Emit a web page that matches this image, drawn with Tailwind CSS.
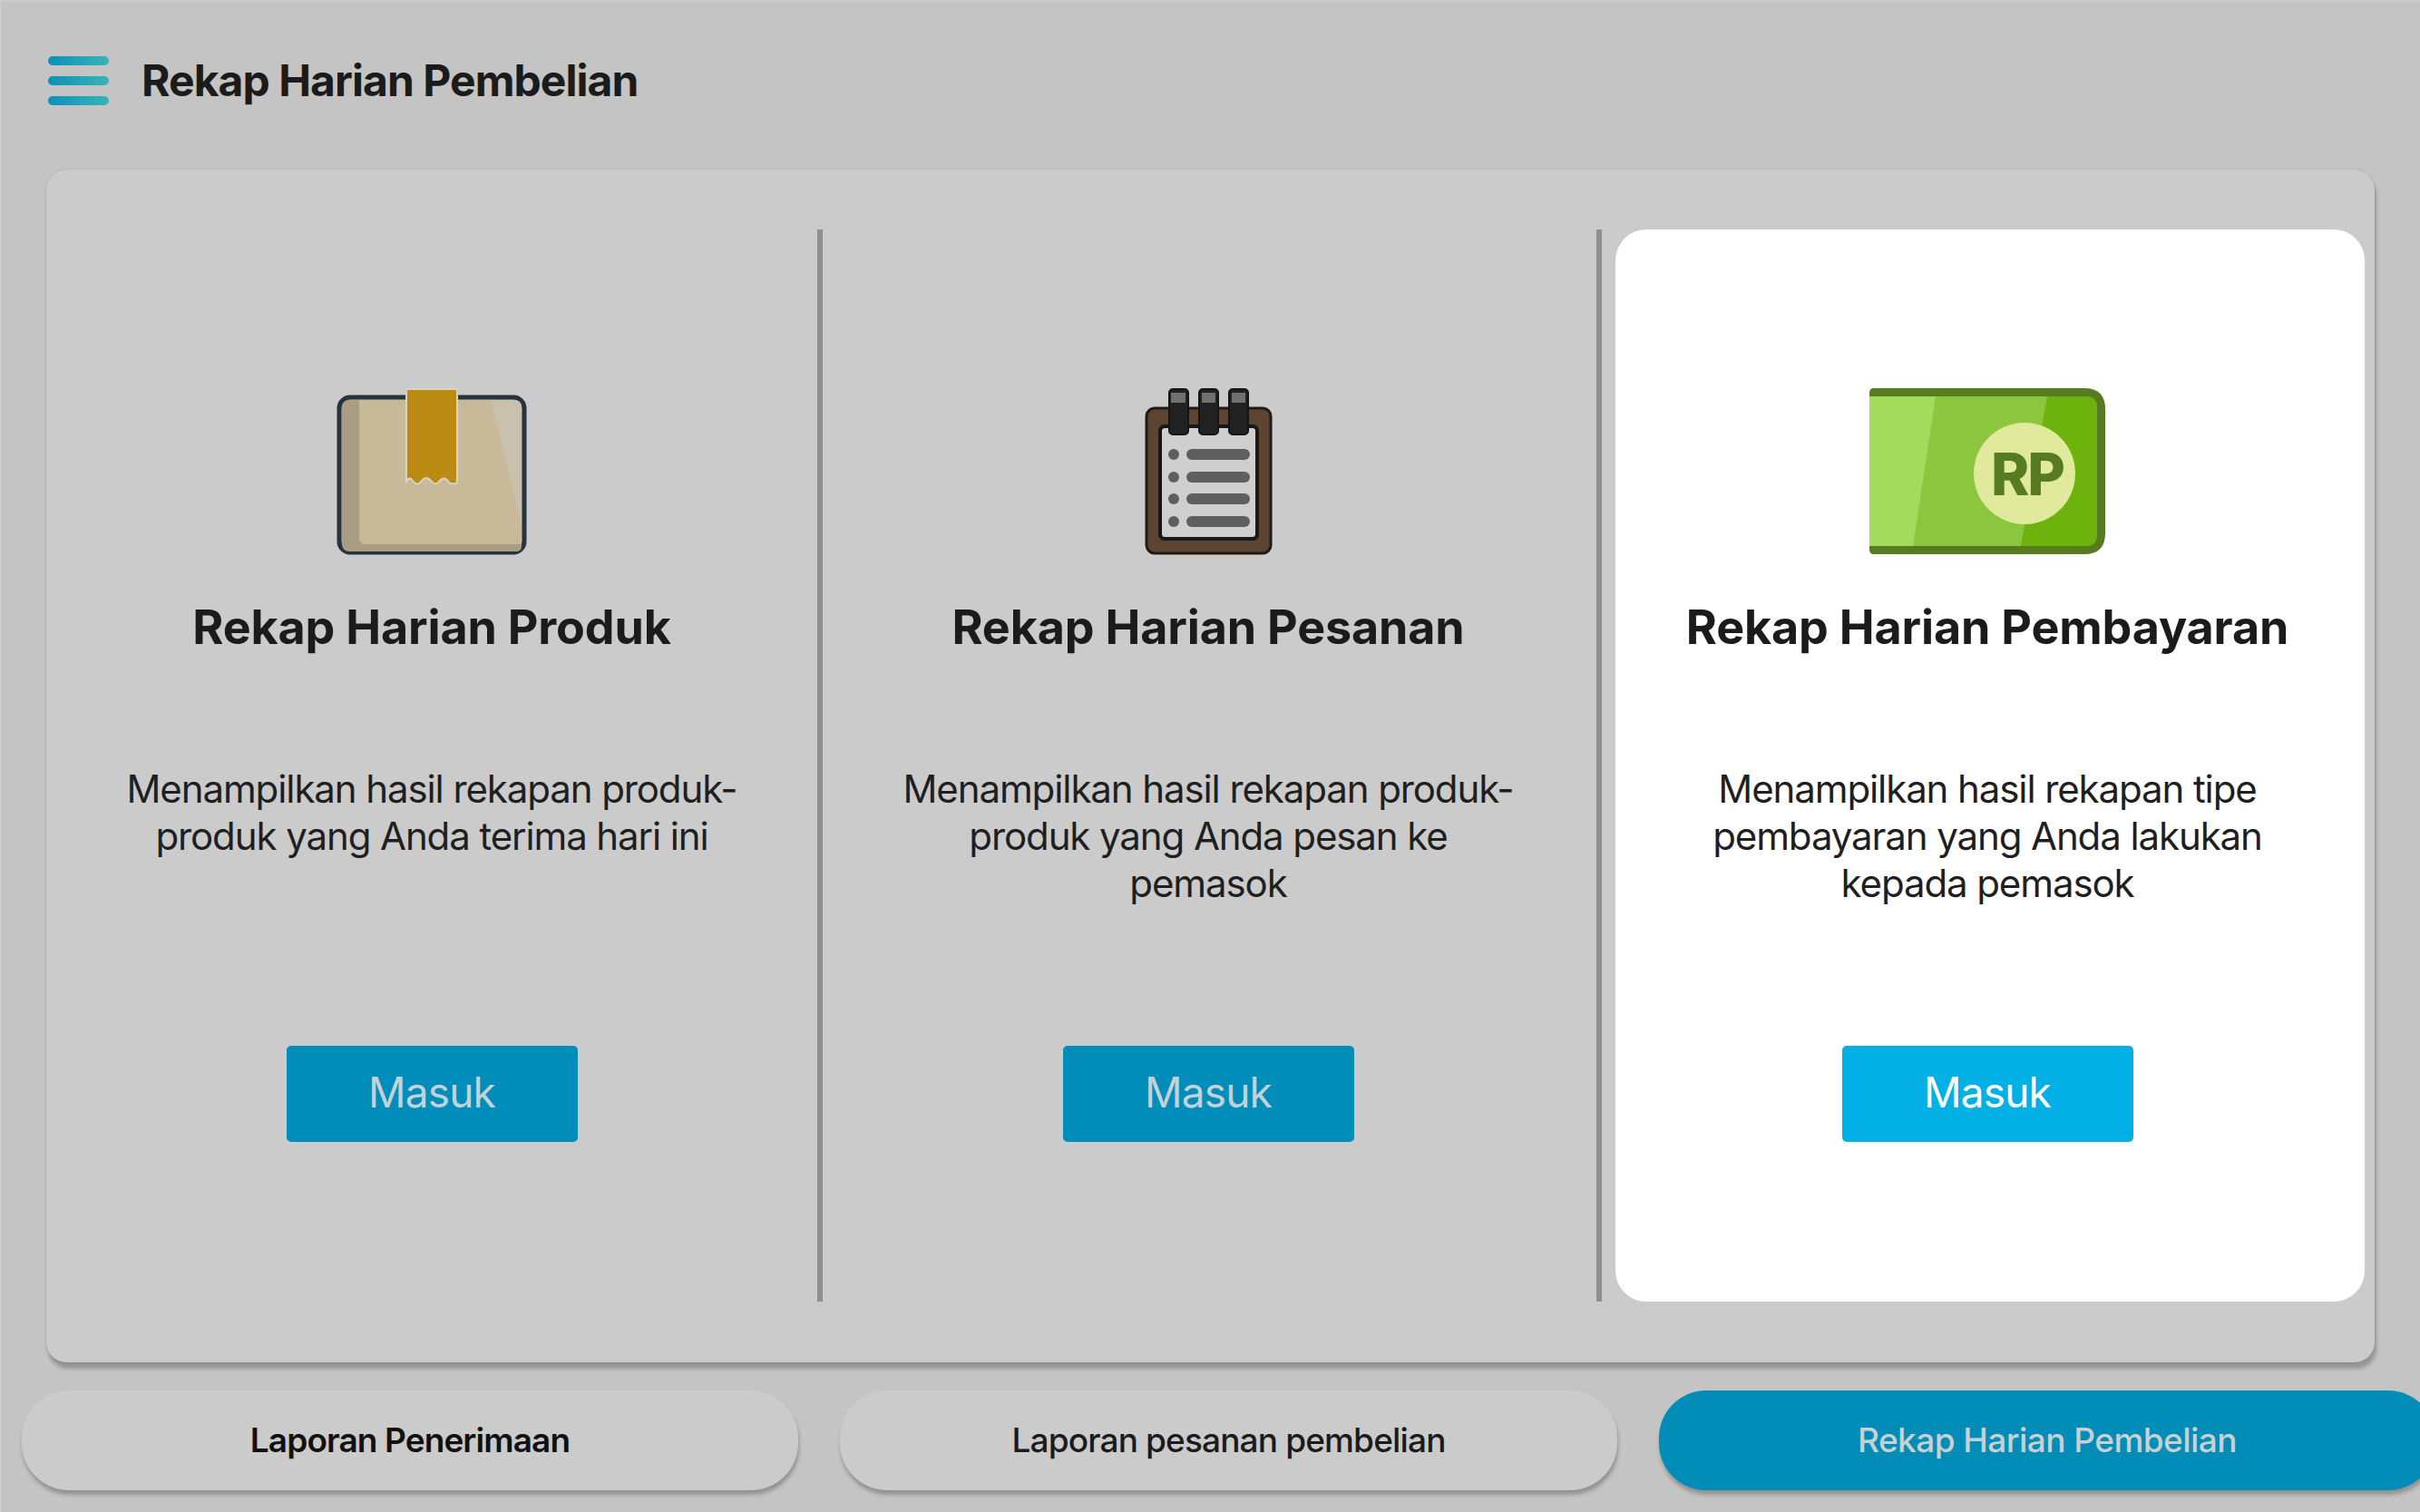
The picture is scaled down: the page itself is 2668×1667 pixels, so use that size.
<!DOCTYPE html>
<html lang="en">
<head>
    <meta charset="UTF-8">
    <meta name="viewport" content="width=device-width, initial-scale=1.0">
    <script src="https://cdn.jsdelivr.net/npm/@tailwindcss/browser@4"></script>
    <title>Rekap Harian Pembelian</title>
</head>
<body class="bg-[#c4c4c4] font-['Inter',sans-serif] overflow-hidden">
    <div class="h-[1667px] w-[2668px] flex flex-col overflow-hidden border-t-2 border-l-2 border-[#cdcdcd]">
        <!-- Header -->
        <header class="h-[185px] shrink-0 pl-[51px] pb-[11px] flex items-center">
            <div class="w-[67px] flex flex-col gap-[12px]">
                <span class="h-[10px] rounded-full bg-linear-to-r from-[#0a8fb8] to-[#38b4b4]"></span>
                <span class="h-[10px] rounded-full bg-linear-to-r from-[#0a8fb8] to-[#38b4b4]"></span>
                <span class="h-[10px] rounded-full bg-linear-to-r from-[#0a8fb8] to-[#38b4b4]"></span>
            </div>
            <h1 class="ml-[36px] text-[48px] font-bold tracking-[-0.95px] text-[#1b1b1b]">Rekap Harian Pembelian</h1>
        </header>

        <!-- Card -->
        <main class="ml-[49px] w-[2567px] h-[1315px] shrink-0 bg-[#cbcbcb] rounded-[22px] shadow-[2px_7px_4px_rgba(0,0,0,0.24),0_0_2px_rgba(0,0,0,0.2)] pt-[66px] pb-[67px] flex">
            <section class="w-[850px] shrink-0 flex flex-col items-center pt-[169px]">
                <div class="h-[190px] flex items-end">
                    <svg width="210" height="184" viewBox="370 428 210 184">
                        <rect x="373" y="438" width="204" height="171" rx="12" fill="#c8b998" stroke="#28343d" stroke-width="5"/>
                        <path d="M376 450 q0-9 9-9 h10 v152 q0 7 7 7 h172 v2 q0 6-6 6 h-183 q-9 0-9-9z" fill="#a99d84"/>
                        <path d="M540 441 h26 q8 0 8 8 v130z" fill="#c9c1ae"/>
                        <path d="M447 429 h56 v103 q-5 3-9 0 q-5-8-10 -2 q-5 7-10 0 q-5-6-10 0 q-5 7-10 0 q-4-6-7 2z" fill="#bb8b14" stroke="#d9d4c4" stroke-width="2"/>
                    </svg>
                </div>
                <h2 class="mt-[50px] h-[60px] leading-[60px] text-[52px] font-bold tracking-[-0.15px] text-[#1b1b1b]">Rekap Harian Produk</h2>
                <p class="mt-[122px] h-[309px] w-[720px] text-center text-[42px] leading-[52px] tracking-[-1.1px] text-[#1f1f1f]">Menampilkan hasil rekapan produk-produk yang Anda terima hari ini</p>
                <a class="w-[321px] h-[106px] pb-[3px] flex items-center justify-center rounded-[5px] bg-[#018db9] text-[46px] tracking-[-0.8px] text-[#c2d2d8]">Masuk</a>
            </section>

            <div class="w-[6px] shrink-0 bg-[#8f8f8f]"></div>

            <section class="w-[853px] shrink-0 pr-[3px] flex flex-col items-center pt-[169px]">
                <div class="h-[190px] flex items-end">
                    <svg width="141" height="184" viewBox="1261 427 141 184">
                        <rect x="1263" y="449" width="137" height="160" rx="9" fill="#5c4433" stroke="#231a14" stroke-width="3"/>
                        <rect x="1278" y="469" width="107" height="124" rx="5" fill="#cfcfcf" stroke="#171717" stroke-width="4"/>
                        <g fill="#222222" stroke="#151515" stroke-width="2">
                            <rect x="1288" y="428" width="21" height="50" rx="4"/>
                            <rect x="1321" y="428" width="21" height="50" rx="4"/>
                            <rect x="1354" y="428" width="21" height="50" rx="4"/>
                        </g>
                        <g fill="#707070">
                            <rect x="1290" y="432" width="16" height="11"/>
                            <rect x="1324" y="432" width="15" height="11"/>
                            <rect x="1357" y="432" width="15" height="11"/>
                        </g>
                        <g fill="#5f5f5f">
                            <circle cx="1293" cy="500" r="6"/>
                            <circle cx="1293" cy="525" r="6"/>
                            <circle cx="1293" cy="549" r="6"/>
                            <circle cx="1293" cy="574" r="6"/>
                            <rect x="1307" y="494" width="70" height="12" rx="6"/>
                            <rect x="1307" y="519" width="70" height="12" rx="6"/>
                            <rect x="1307" y="543" width="70" height="12" rx="6"/>
                            <rect x="1307" y="568" width="70" height="12" rx="6"/>
                        </g>
                    </svg>
                </div>
                <h2 class="mt-[50px] h-[60px] leading-[60px] text-[52px] font-bold tracking-[-0.15px] text-[#1b1b1b]">Rekap Harian Pesanan</h2>
                <p class="mt-[122px] h-[309px] w-[680px] text-center text-[42px] leading-[52px] tracking-[-1.1px] text-[#1f1f1f]">Menampilkan hasil rekapan produk-produk yang Anda pesan ke pemasok</p>
                <a class="w-[321px] h-[106px] pb-[3px] flex items-center justify-center rounded-[5px] bg-[#018db9] text-[46px] tracking-[-0.8px] text-[#c2d2d8]">Masuk</a>
            </section>

            <div class="w-[6px] shrink-0 bg-[#8f8f8f]"></div>

            <section class="ml-[15px] w-[826px] shrink-0 bg-white rounded-[34px] pr-[6px] flex flex-col items-center pt-[169px]">
                <div class="h-[190px] flex items-end">
                    <svg width="262" height="184" viewBox="2060 427 262 184">
                        <path d="M2066 427 H2298 q23 0 23 23 V587 q0 23-23 23 H2066 q-5 0-5-5 V432 q0-5 5-5z" fill="#567b20"/>
                        <path d="M2061 436 H2300 q12 0 12 12 V589 q0 12-12 12 H2061z" fill="#6db20d"/>
                        <path d="M2061 436 H2257 L2228 601 H2061z" fill="#8bc63e"/>
                        <path d="M2061 436 H2134 L2109 601 H2061z" fill="#a3dc5c"/>
                        <circle cx="2232" cy="521" r="56" fill="#e0e99c"/>
                        <text x="2235" y="545" text-anchor="middle" font-family="Inter, sans-serif" font-weight="800" font-size="64" letter-spacing="-2" fill="#567b20">RP</text>
                    </svg>
                </div>
                <h2 class="mt-[50px] h-[60px] leading-[60px] text-[52px] font-bold tracking-[-0.15px] text-[#1b1b1b]">Rekap Harian Pembayaran</h2>
                <p class="mt-[122px] h-[309px] w-[640px] text-center text-[42px] leading-[52px] tracking-[-1.1px] text-[#1f1f1f]">Menampilkan hasil rekapan tipe pembayaran yang Anda lakukan kepada pemasok</p>
                <a class="w-[321px] h-[106px] pb-[3px] flex items-center justify-center rounded-[5px] bg-[#03b0e5] text-[46px] tracking-[-0.8px] text-white">Masuk</a>
            </section>
        </main>

        <!-- Bottom tabs -->
        <nav class="mt-[31px] ml-[22px] flex gap-[46px] shrink-0">
            <a class="w-[856px] h-[110px] shrink-0 flex items-center justify-center rounded-[52px] bg-[#cbcbcb] shadow-[1px_5px_4px_rgba(0,0,0,0.25)] text-[37px] font-semibold tracking-[-0.9px] text-[#111111]">Laporan Penerimaan</a>
            <a class="w-[857px] h-[110px] shrink-0 flex items-center justify-center rounded-[52px] bg-[#cbcbcb] shadow-[1px_5px_4px_rgba(0,0,0,0.25)] text-[37px] font-medium tracking-[-0.85px] text-[#1b1b1b]">Laporan pesanan pembelian</a>
            <a class="w-[856px] h-[110px] shrink-0 flex items-center justify-center rounded-[52px] bg-[#028cb8] shadow-[1px_5px_4px_rgba(0,0,0,0.25)] text-[37px] font-medium tracking-[-0.55px] text-[#c9d0d2]">Rekap Harian Pembelian</a>
        </nav>
    </div>
</body>
</html>
